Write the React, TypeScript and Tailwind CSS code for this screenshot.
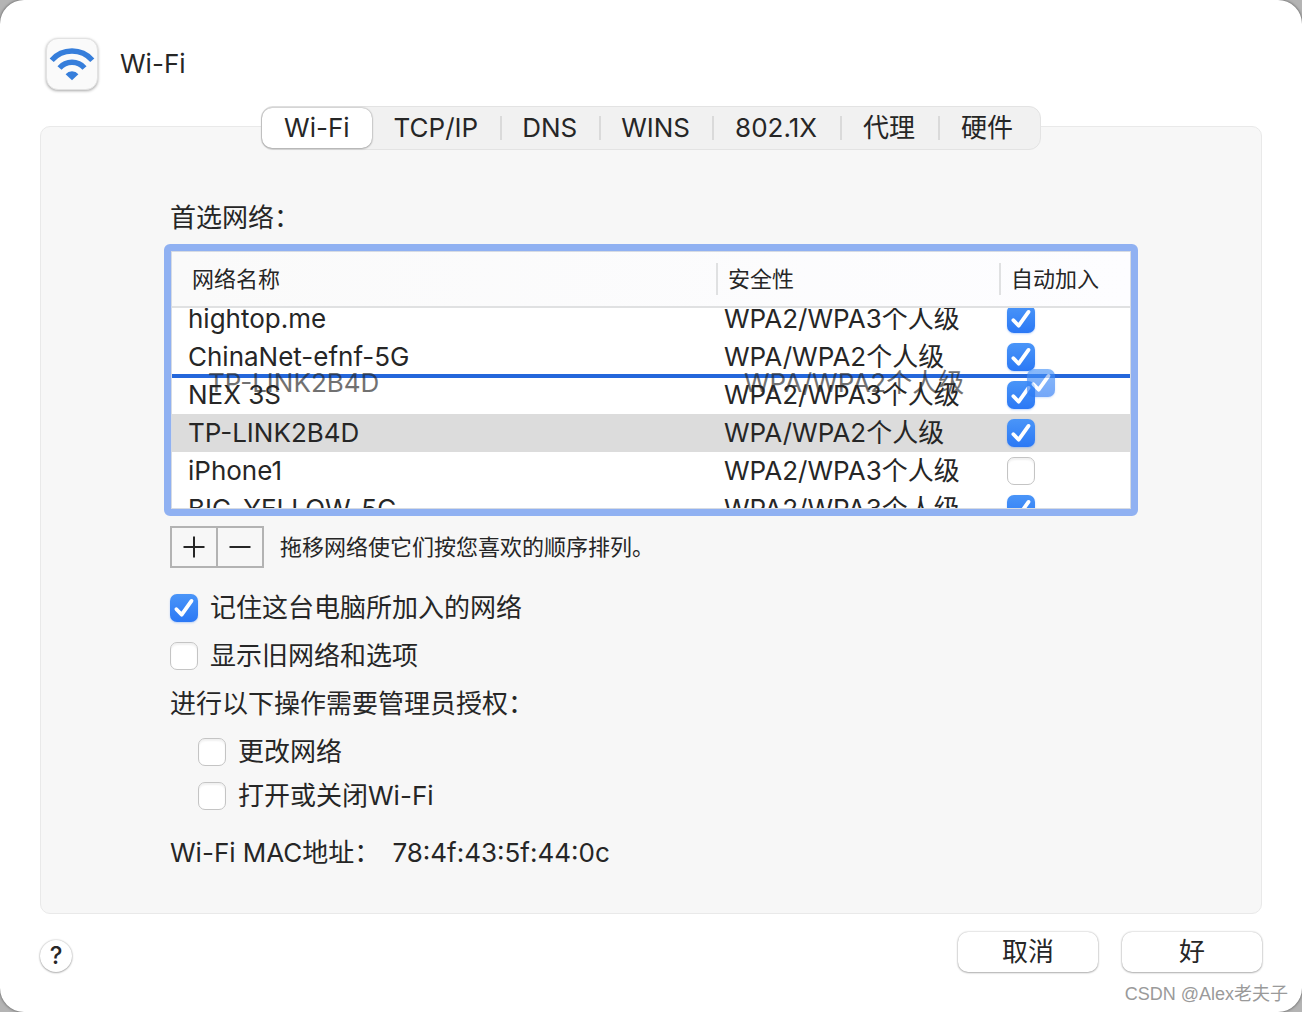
import { useState } from 'react'
import clsx from 'clsx'

const tabs = ['Wi-Fi', 'TCP/IP', 'DNS', 'WINS', '802.1X', '代理', '硬件']

const networks = [
  { name: 'hightop.me', security: 'WPA2/WPA3个人级', autoJoin: true },
  { name: 'ChinaNet-efnf-5G', security: 'WPA/WPA2个人级', autoJoin: true },
  { name: 'NEX 3S', security: 'WPA2/WPA3个人级', autoJoin: true },
  { name: 'TP-LINK2B4D', security: 'WPA/WPA2个人级', autoJoin: true },
  { name: 'iPhone1', security: 'WPA2/WPA3个人级', autoJoin: false },
  { name: 'BIG_YELLOW_5G', security: 'WPA2/WPA3个人级', autoJoin: true },
]

const columns = 'grid grid-cols-[1fr_283px_131px]'

function Checkbox({ id, label, defaultChecked }: { id?: string; label?: string; defaultChecked?: boolean }) {
  return (
    <span className="grid size-7 shrink-0">
      <input
        id={id}
        type="checkbox"
        aria-label={label}
        defaultChecked={defaultChecked}
        className="peer col-start-1 row-start-1 size-7 appearance-none rounded-[7px] border border-[#c4c4c4] bg-white shadow-[inset_0_2px_2px_rgba(0,0,0,0.06)] checked:border-0 checked:bg-linear-to-b checked:from-[#4a95f8] checked:to-[#2b78f5] checked:shadow-[0_1px_2px_rgba(43,120,245,0.3)]"
      />
      <svg
        viewBox="0 0 28 28"
        className="pointer-events-none col-start-1 row-start-1 hidden size-7 peer-checked:block"
        fill="none"
        stroke="white"
        strokeWidth="3.8"
        strokeLinecap="round"
        strokeLinejoin="round"
      >
        <path d="M6.4 15.2 11.7 20.7 21.5 6.9" />
      </svg>
    </span>
  )
}

function Option({ id, text, defaultChecked }: { id: string; text: string; defaultChecked?: boolean }) {
  return (
    <div className="flex items-center gap-3">
      <Checkbox id={id} defaultChecked={defaultChecked} />
      <label htmlFor={id}>{text}</label>
    </div>
  )
}

function WifiIcon() {
  return (
    <div className="size-[52px] rounded-xl border border-[#e2e2e2] bg-[#fafafa] shadow-[0_1px_3px_rgba(0,0,0,0.35)]">
      <svg viewBox="0 0 50 50" className="size-full" fill="none" stroke="#367edb" strokeWidth="5.4">
        <path d="M4.7 21.2a27 27 0 0 1 40.6 0" />
        <path d="M12.5 29a16.5 16.5 0 0 1 25 0" />
        <path d="M25 41.2 18.6 35.2a8.4 8.4 0 0 1 12.8 0Z" fill="#367edb" stroke="none" />
      </svg>
    </div>
  )
}

function NetworkTable() {
  return (
    <div className="relative -mx-1.5 mt-2.5 overflow-hidden rounded-md border-[7px] border-[#90b1f2] bg-white">
      <table className="block w-full border border-[#d6dbe3]">
        <thead className="block border-b-2 border-[#e0e1e2] bg-linear-to-r from-[#fafafa] to-[#fdfdff] text-[22px]">
          <tr className={clsx(columns, 'h-[54px] items-center text-left')}>
            <th className="pl-5 font-normal">网络名称</th>
            <th className="border-l-2 border-[#e0e1e2] pl-2.5 font-normal">安全性</th>
            <th className="border-l-2 border-[#e0e1e2] pl-2.5 font-normal">自动加入</th>
          </tr>
        </thead>
        <tbody className="block h-50 overflow-hidden">
          {networks.map((network, i) => (
            <tr
              key={network.name}
              className={clsx(columns, 'h-[38px] items-center', i === 0 && '-mt-2', i === 3 && 'bg-[#dcdcdc]')}
            >
              <td className="pl-4">{network.name}</td>
              <td className="pl-2">{network.security}</td>
              <td className="pl-2">
                <Checkbox label={`自动加入 ${network.name}`} defaultChecked={network.autoJoin} />
              </td>
            </tr>
          ))}
        </tbody>
      </table>

      {/* drop position and the row being dragged */}
      <div className="absolute inset-x-px top-[123px] h-1 bg-[#2467db]" />
      <div
        aria-hidden="true"
        className={clsx(columns, 'pointer-events-none absolute top-[113px] right-[-19px] left-[21px] h-[38px] items-center opacity-65')}
      >
        <span className="pl-4">TP-LINK2B4D</span>
        <span className="pl-2">WPA/WPA2个人级</span>
        <span className="pl-2">
          <Checkbox defaultChecked />
        </span>
      </div>
    </div>
  )
}

export default function App() {
  const [active, setActive] = useState('Wi-Fi')

  return (
    <div className="min-h-screen bg-[#b4b4b4] font-['Inter','Noto_Sans_CJK_SC',sans-serif] text-[26px] leading-8 text-[#262626]">
      <main className="relative flex min-h-screen flex-col rounded-3xl bg-white px-10 pt-[38px] shadow-[0_0_3px_rgba(0,0,0,0.6)]">
        <header className="flex items-center gap-[22px] pl-1.5">
          <WifiIcon />
          <h1>Wi-Fi</h1>
        </header>

        <nav className="relative z-10 mx-auto mt-4 flex h-11 items-center rounded-xl border border-[#e3e3e3] bg-[#f1f1f1] pr-1">
          {tabs.map((tab, i) => (
            <button
              key={tab}
              onClick={() => setActive(tab)}
              className={clsx(
                'h-10',
                i < 4 ? 'px-[22px]' : 'px-[23px]',
                tab === active && 'rounded-[10px] bg-white shadow-[0_0_2px_rgba(0,0,0,0.4),0_1px_2px_rgba(0,0,0,0.2)]',
                i > 1 && 'bg-[linear-gradient(#dadada,#dadada)] bg-[length:2px_24px] bg-left bg-no-repeat',
              )}
            >
              {tab}
            </button>
          ))}
        </nav>

        <section className="-mt-6 rounded-[10px] border border-[#e9e9e9] bg-[#f7f7f7] px-[129px] pt-[75px] pb-11">
          <h2>首选网络：</h2>
          <NetworkTable />

          <div className="mt-2.5 flex items-center gap-4">
            <div className="flex h-[42px] border-2 border-[#b3b3b3]">
              <button aria-label="添加" className="flex w-[46px] items-center justify-center border-r-2 border-[#b3b3b3]">
                <svg viewBox="0 0 22 22" className="size-[22px]" stroke="#262626" strokeWidth="2">
                  <path d="M11 0.5v21M0.5 11h21" />
                </svg>
              </button>
              <button aria-label="移除" className="flex w-11 items-center justify-center">
                <svg viewBox="0 0 22 22" className="size-[22px]" stroke="#262626" strokeWidth="2">
                  <path d="M0.5 11h21" />
                </svg>
              </button>
            </div>
            <p className="text-[22px]">拖移网络使它们按您喜欢的顺序排列。</p>
          </div>

          <div className="mt-6 flex flex-col gap-4">
            <Option id="remember" text="记住这台电脑所加入的网络" defaultChecked />
            <Option id="legacy" text="显示旧网络和选项" />
            <p>进行以下操作需要管理员授权：</p>
            <div className="flex flex-col gap-3 pl-7">
              <Option id="change" text="更改网络" />
              <Option id="toggle" text="打开或关闭Wi-Fi" />
            </div>
          </div>

          <dl className="mt-[25px] flex">
            <dt>Wi-Fi MAC地址：</dt>
            <dd className="ml-3">78:4f:43:5f:44:0c</dd>
          </dl>
        </section>

        <footer className="flex items-start gap-6 pt-[18px] pb-9">
          <button
            aria-label="帮助"
            className="mt-2 mr-auto size-8 rounded-full bg-white text-2xl leading-8 font-medium shadow-[0_0_2px_rgba(0,0,0,0.3),0_1px_2px_rgba(0,0,0,0.25)]"
          >
            ?
          </button>
          <button className="h-10 w-[140px] rounded-[10px] bg-white shadow-[0_0_2px_rgba(0,0,0,0.3),0_1px_2px_rgba(0,0,0,0.25)]">
            取消
          </button>
          <button className="h-10 w-[140px] rounded-[10px] bg-white shadow-[0_0_2px_rgba(0,0,0,0.3),0_1px_2px_rgba(0,0,0,0.25)]">
            好
          </button>
        </footer>

        <span className="absolute right-3.5 bottom-1.5 text-[18px] leading-6 text-[#9a9a9a] font-['Liberation_Sans','Noto_Sans_CJK_SC',sans-serif]">
          CSDN @Alex老夫子
        </span>
      </main>
    </div>
  )
}
